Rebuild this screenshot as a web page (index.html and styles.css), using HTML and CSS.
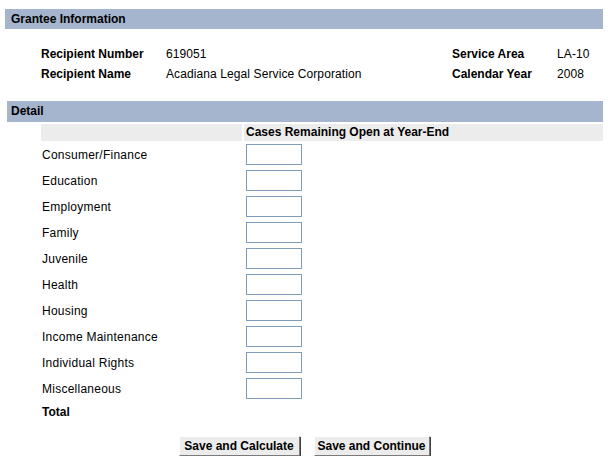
FILE: index.html
```html
<!DOCTYPE html>
<html>
<head>
<meta charset="utf-8">
<link rel="stylesheet" href="styles.css">
</head>
<body>
<div class="page">
  <div class="bar bar-grantee">Grantee Information</div>
  <div class="info">
    <div class="info-label">Recipient Number</div>
    <div class="info-value">619051</div>
    <div class="info-label">Service Area</div>
    <div class="info-value">LA-10</div>
    <div class="info-label">Recipient Name</div>
    <div class="info-value">Acadiana Legal Service Corporation</div>
    <div class="info-label">Calendar Year</div>
    <div class="info-value">2008</div>
  </div>
  <div class="bar bar-detail">Detail</div>
  <div class="detail">
    <div class="head-blank"></div>
    <div class="head-cell">Cases Remaining Open at Year-End</div>

    <div class="row-label">Consumer/Finance</div><div class="row-cell"><input class="num" type="text"></div>
    <div class="row-label">Education</div><div class="row-cell"><input class="num" type="text"></div>
    <div class="row-label">Employment</div><div class="row-cell"><input class="num" type="text"></div>
    <div class="row-label">Family</div><div class="row-cell"><input class="num" type="text"></div>
    <div class="row-label">Juvenile</div><div class="row-cell"><input class="num" type="text"></div>
    <div class="row-label">Health</div><div class="row-cell"><input class="num" type="text"></div>
    <div class="row-label">Housing</div><div class="row-cell"><input class="num" type="text"></div>
    <div class="row-label">Income Maintenance</div><div class="row-cell"><input class="num" type="text"></div>
    <div class="row-label">Individual Rights</div><div class="row-cell"><input class="num" type="text"></div>
    <div class="row-label">Miscellaneous</div><div class="row-cell"><input class="num" type="text"></div>
    <div class="row-label total">Total</div><div class="row-cell total-cell"></div>
  </div>
  <div class="actions">
    <button class="btn btn-calc" type="button">Save and Calculate</button>
    <button class="btn btn-cont" type="button">Save and Continue</button>
  </div>
</div>
</body>
</html>
```

FILE: styles.css
```css
html, body {
  margin: 0;
  padding: 0;
  background: #ffffff;
}

body {
  font-family: "Liberation Sans", Arial, sans-serif;
  font-size: 12px;
  color: #000000;
}

.page {
  width: 608px;
  padding-top: 9px;
}

.bar {
  background: #a4b5cd;
  font-weight: bold;
  font-size: 12px;
  height: 20px;
  line-height: 20px;
  box-sizing: border-box;
  margin-right: 5px;
}

.bar-grantee {
  margin-left: 5px;
  padding-left: 6px;
}

.bar-detail {
  margin-left: 7px;
  padding-left: 4px;
  height: 21px;
  line-height: 21px;
}

.info {
  display: grid;
  grid-template-columns: 125px 286px 105px auto;
  grid-template-rows: 20px 20px;
  align-items: center;
  padding: 15px 0 0 41px;
  margin-bottom: 17px;
}

.info-label {
  font-weight: bold;
}

.info-value {
  letter-spacing: 0.1px;
}

.detail {
  display: grid;
  grid-template-columns: 201px 359px;
  column-gap: 2px;
  margin-left: 41px;
  margin-top: 2px;
  grid-template-rows: 17px repeat(10, 26px) 17px;
}

.head-blank {
  background: #ececec;
}

.head-cell {
  background: #ececec;
  font-weight: bold;
  padding-left: 2px;
  line-height: 17px;
}

.row-label {
  padding-left: 1px;
  display: flex;
  align-items: center;
  padding-top: 1px;
  letter-spacing: 0.25px;
}

.row-label.total {
  font-weight: bold;
  letter-spacing: 0;
  padding-top: 5px;
}

.row-cell {
  display: flex;
  align-items: flex-start;
  padding-top: 3px;
  padding-left: 2px;
}

.num {
  width: 56px;
  height: 21px;
  box-sizing: border-box;
  border: 1px solid #7f9db9;
  margin: 0;
  padding: 1px 2px;
  font-family: "Liberation Sans", Arial, sans-serif;
  font-size: 12px;
  background: #ffffff;
}

.actions {
  display: flex;
  justify-content: center;
  gap: 14px;
  margin-top: 18px;
}

.btn {
  font-family: "Liberation Sans", Arial, sans-serif;
  font-weight: bold;
  font-size: 12px;
  height: 20px;
  padding: 0;
  white-space: nowrap;
  background: #ececec;
  border: 1px solid;
  border-color: #ffffff #7a7a7a #7a7a7a #ffffff;
  box-shadow: 1px 1px 0 #404040;
  color: #000000;
  margin: 0;
}

.btn-calc {
  width: 121px;
}

.btn-cont {
  width: 116px;
}
```
